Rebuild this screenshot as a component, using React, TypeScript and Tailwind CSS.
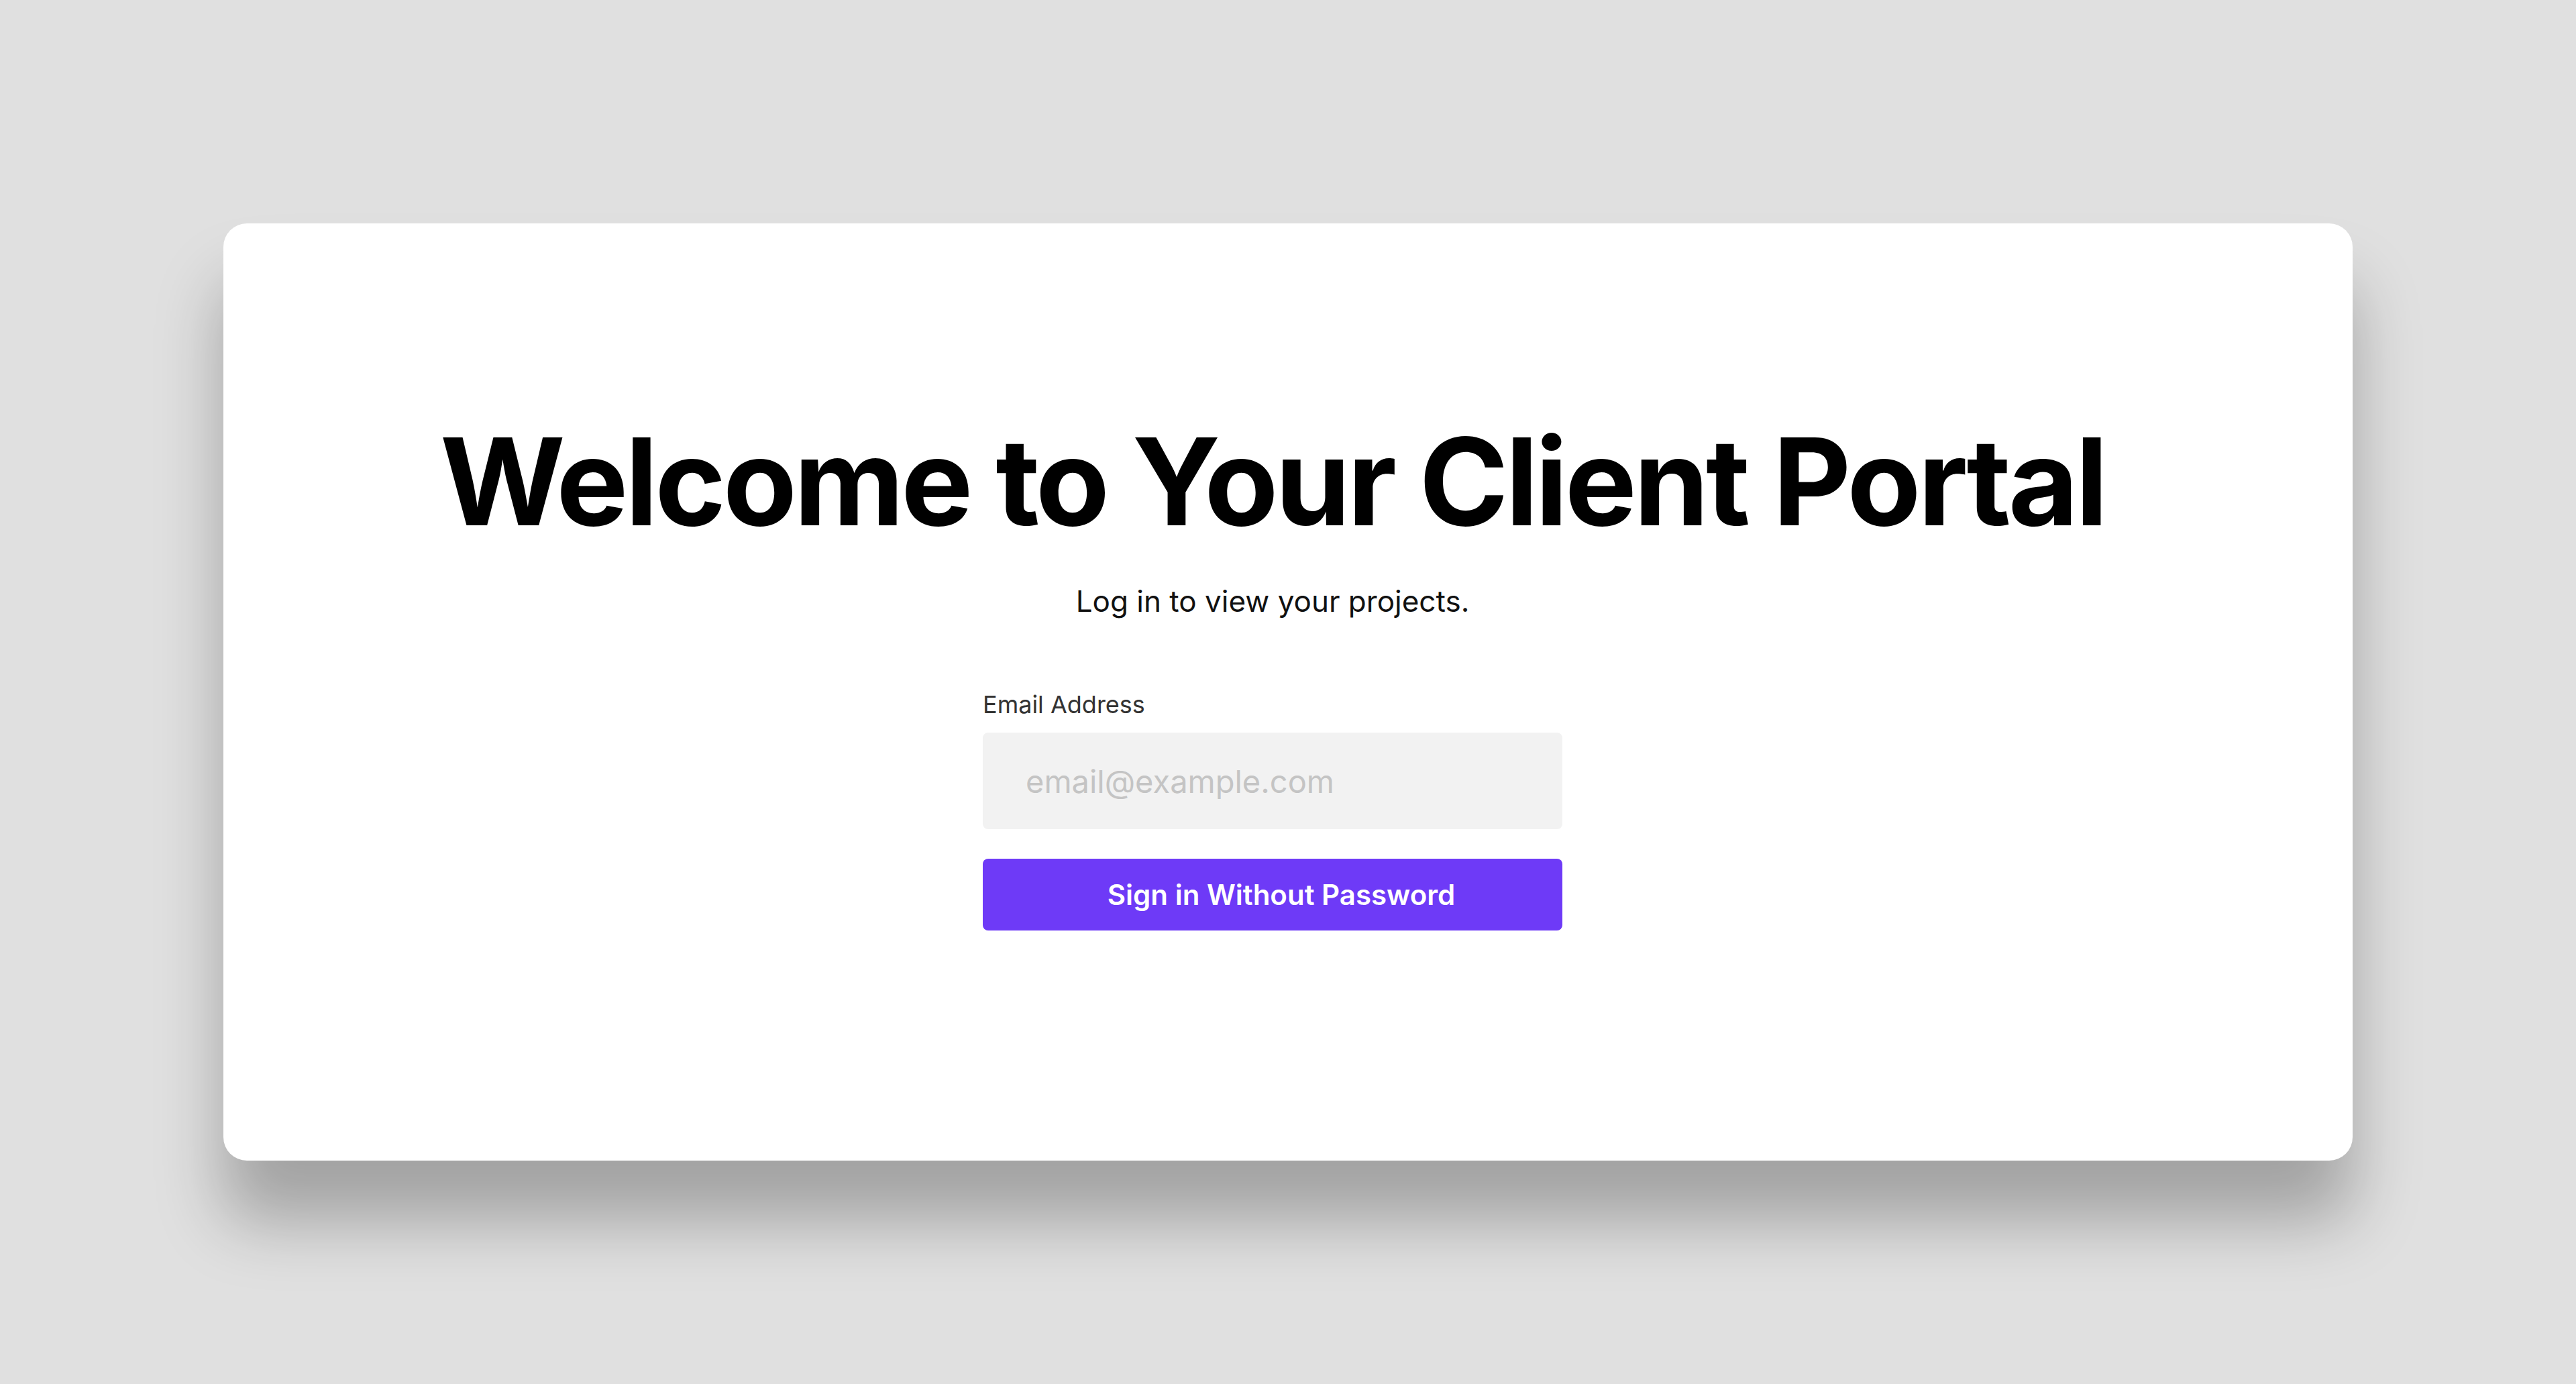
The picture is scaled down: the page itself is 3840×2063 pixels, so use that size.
import React from "react";

export default function App() {
  return (
    <div className="min-h-[2063px] w-full bg-[#e0e0e0] pt-[333px] font-['Inter','Noto_Sans',sans-serif]">
      <div className="mx-auto h-[1397px] w-[3174px] rounded-[35px] bg-white shadow-[0_90px_100px_rgba(0,0,0,0.28)]">
        <div className="flex flex-col items-center pr-[46px] pt-[295px]">
          <h1 className="text-[180px] font-bold leading-none tracking-[-0.025em] text-black">
            Welcome to Your Client Portal
          </h1>
          <p className="mt-[66px] text-[44px] leading-none text-[#111111]">
            Log in to view your projects.
          </p>
          <form className="mt-[114px] flex w-[864px] flex-col" onSubmit={(e) => e.preventDefault()}>
            <label htmlFor="email" className="text-[36px] leading-none text-[#333333]">
              Email Address
            </label>
            <input
              id="email"
              type="email"
              placeholder="email@example.com"
              className="mt-[24px] h-[144px] w-full rounded-[8px] bg-[#f2f2f2] px-[64px] text-[47px] text-black outline-none placeholder:text-[#c4c4c4]"
            />
            <button
              type="submit"
              className="mt-[44px] h-[107px] w-full rounded-[8px] bg-[#6e3af7] pl-[26px] text-[42px] font-semibold text-white"
            >
              Sign in Without Password
            </button>
          </form>
        </div>
      </div>
    </div>
  );
}
